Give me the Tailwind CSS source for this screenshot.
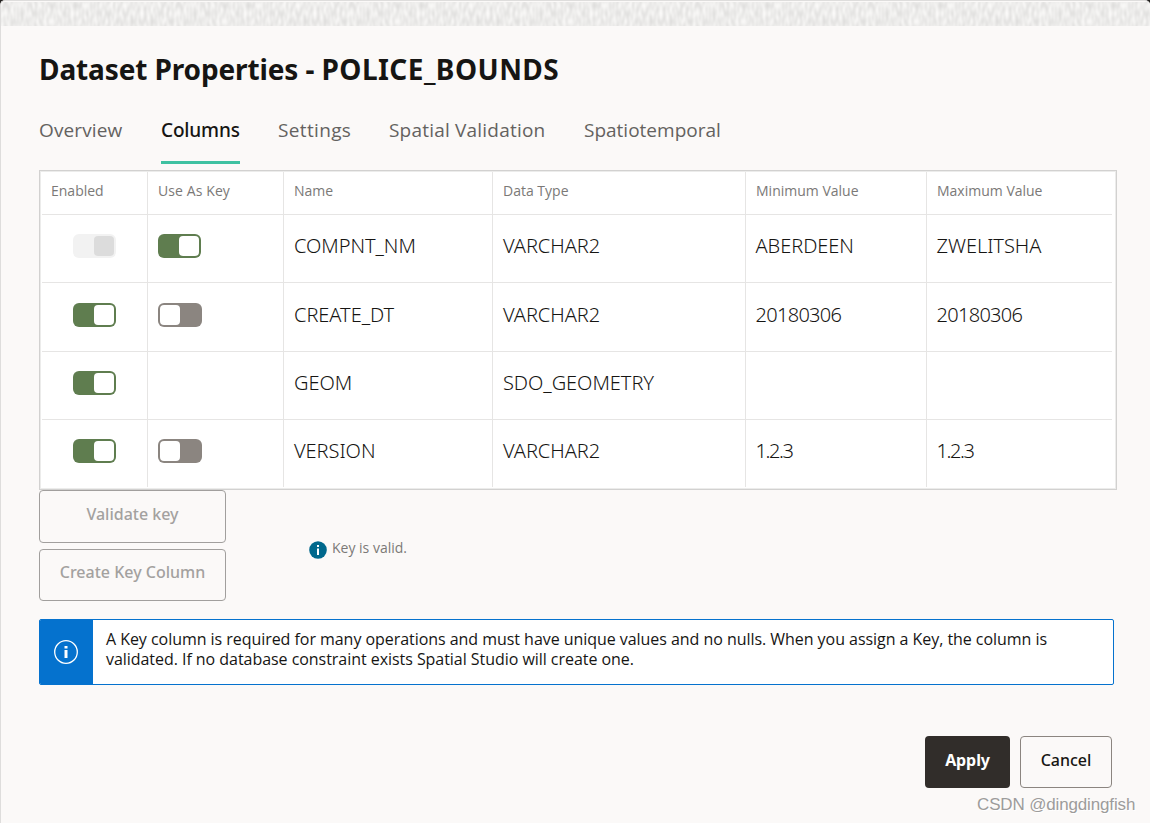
<!DOCTYPE html>
<html lang="en">
<head>
    <meta charset="UTF-8">
    <meta name="viewport" content="width=device-width, initial-scale=1.0">
    <title>Dataset Properties</title>
    <script src="https://cdn.jsdelivr.net/npm/@tailwindcss/browser@4"></script>
</head>
<body class="bg-[#23211f] font-['Noto_Sans',sans-serif] text-[#161513]">
  <div class="relative h-[823px] w-[1150px] overflow-hidden rounded-t-[5px] border-t border-l border-[#dedddc] bg-[#fbf9f8]">

    <!-- Texture strip -->
    <svg class="mt-px block h-6 w-full" viewBox="0 0 1149 24" preserveAspectRatio="none">
      <defs>
        <filter id="grain" x="0" y="0" width="100%" height="100%" color-interpolation-filters="sRGB">
          <feTurbulence type="fractalNoise" baseFrequency="0.3 0.12" numOctaves="1" seed="11" stitchTiles="stitch" />
          <feColorMatrix values="0.16 0 0 0 0.848  0.16 0 0 0 0.845  0.16 0 0 0 0.84  0 0 0 0 1" />
        </filter>
        <rect id="tile" width="173" height="24" filter="url(#grain)" />
      </defs>
      <rect width="1149" height="24" fill="#ebeae8" />
      <use href="#tile" />
      <use href="#tile" x="173" />
      <use href="#tile" x="346" />
      <use href="#tile" x="519" />
      <use href="#tile" x="692" />
      <use href="#tile" x="865" />
      <use href="#tile" x="1038" />
    </svg>

    <div class="pt-[23px] pl-[38px]">
      <h1 class="h-10 text-[28px] leading-10 font-bold tracking-[0.45px] whitespace-nowrap"><span class="tracking-[-0.12px]">Dataset Properties - </span>POLICE_BOUNDS</h1>

      <!-- Tabs -->
      <nav class="mt-[29px] flex h-[46px] gap-[38px] font-['Open_Sans',sans-serif] text-[19px] leading-6 text-[#64625f]">
        <a class="w-[84px] tracking-[0.12px] whitespace-nowrap">Overview</a>
        <a class="w-[79px] border-b-3 border-[#3fc1a1] font-['Noto_Sans',sans-serif] font-medium tracking-[-0.15px] whitespace-nowrap text-[#161513]">Columns</a>
        <a class="w-[73px] tracking-[0.35px] whitespace-nowrap">Settings</a>
        <a class="w-[157px] tracking-[0.2px] whitespace-nowrap">Spatial Validation</a>
        <a class="whitespace-nowrap">Spatiotemporal</a>
      </nav>

      <!-- Columns table -->
      <div class="mt-[6px] h-[320px] w-[1078px] border border-[#d2d1d0] bg-white">
        <div class="h-full border border-[#ececeb] pr-[3px] pl-px">
          <div class="grid h-[43px] grid-cols-[106px_136px_209px_253px_181px_1fr] border-b border-[#e6e5e4] font-['Open_Sans',sans-serif] text-[14px] leading-[38px] text-[#7b7977]">
            <div class="border-r border-[#e6e5e4] pl-[9px]">Enabled</div>
            <div class="border-r border-[#e6e5e4] pl-[10px] tracking-[0.1px]">Use As Key</div>
            <div class="border-r border-[#e6e5e4] pl-[10px]">Name</div>
            <div class="border-r border-[#e6e5e4] pl-[10px]">Data Type</div>
            <div class="border-r border-[#e6e5e4] pl-[10px]">Minimum Value</div>
            <div class="pl-[10px]">Maximum Value</div>
          </div>
          <div id="rows" class="text-[20px] leading-6 font-light tracking-[-0.05px]"></div>
        </div>
      </div>

      <!-- Key actions -->
      <div class="flex">
        <div class="flex w-[187px] flex-col gap-1.5">
          <button class="h-[53px] rounded border border-[#a19f9d] pb-1.5 text-base leading-6 font-medium text-[#a3a19f]">Validate key</button>
          <button class="h-[52px] rounded border border-[#a19f9d] pb-[7px] text-base leading-6 font-medium text-[#a3a19f]">Create Key Column</button>
        </div>
        <div class="mt-12 ml-[83px] flex h-6 gap-[5px]">
          <svg class="mt-[3px] h-[18px] w-[18px]" viewBox="0 0 18 18">
            <circle cx="9" cy="9" r="8.8" fill="#00688c" />
            <path d="M8 4h2v2H8zM8 7.5h2V14H8z" fill="#fff" />
          </svg>
          <span class="font-['Open_Sans',sans-serif] text-[14px] leading-5 text-[#7b7977]">Key is valid.</span>
        </div>
      </div>

      <!-- Info banner -->
      <div class="mt-[18px] flex h-[66px] w-[1075px] overflow-hidden rounded-[2px] border border-[#0572ce] bg-white">
        <div class="flex w-[53px] items-center bg-[#0572ce] pl-[14px]">
          <svg class="h-6 w-6" viewBox="0 0 24 24">
            <circle cx="12" cy="12" r="11.3" fill="none" stroke="#fff" stroke-width="1.3" />
            <path d="M10.5 6h3v2.6h-3zM10.5 10h3v8h-3z" fill="#fff" />
          </svg>
        </div>
        <p class="pt-[9px] pl-[13px] font-['Open_Sans',sans-serif] text-base leading-5 tracking-[-0.045px] whitespace-nowrap">A Key column is required for many operations and must have unique values and no nulls. When you assign a Key, the column is<br>validated. If no database constraint exists Spatial Studio will create one.</p>
      </div>

      <!-- Footer -->
      <div class="mt-[51px] flex w-[1073px] justify-end gap-2.5">
        <button class="h-[52px] w-[85px] rounded bg-[#312d2a] pb-[5px] text-base leading-6 font-bold tracking-[-0.1px] text-white">Apply</button>
        <button class="h-[52px] w-[92px] rounded border border-[#8b8580] pb-[5px] text-base leading-6 font-medium">Cancel</button>
      </div>
    </div>

    <div class="absolute top-[792px] left-[976px] font-['Liberation_Sans',sans-serif] text-[17px] leading-6 tracking-[-0.15px] whitespace-nowrap text-[#9d9c9b] [text-shadow:1px_1px_0_#fff]">CSDN @dingdingfish</div>
  </div>

  <script>
    // Toggle markup for each state
    const toggles = {
      on: '<div class="flex h-6 w-[43px] justify-end rounded-md bg-[#5f7d4f] p-[2px]"><div class="h-5 w-5 rounded bg-white"></div></div>',
      off: '<div class="flex h-6 w-11 rounded-md bg-[#8b8580] p-[2px]"><div class="h-5 w-5 rounded bg-white"></div></div>',
      disabled: '<div class="flex h-6 w-[43px] justify-end rounded-md bg-[#f2f2f2] p-[2px]"><div class="h-5 w-5 rounded bg-[#dcdcdc]"></div></div>',
      none: '',
    };

    const rows = [
      { height: 'h-[68px] pt-[19px]', enabled: 'disabled', key: 'on', name: 'COMPNT_NM', type: 'VARCHAR2', min: 'ABERDEEN', max: 'ZWELITSHA' },
      { height: 'h-[69px] pt-5', enabled: 'on', key: 'off', name: 'CREATE_DT', type: 'VARCHAR2', min: '20180306', max: '20180306' },
      { height: 'h-[68px] pt-[19px]', enabled: 'on', key: 'none', name: 'GEOM', type: 'SDO_GEOMETRY', min: '', max: '' },
      { height: 'h-[67px] pt-[19px]', enabled: 'on', key: 'off', name: 'VERSION', type: 'VARCHAR2', min: '1.2.3', max: '1.2.3' },
    ];

    // Digits are set tighter than capitals, version numbers tighter still
    function valueClass(value) {
      if (value.includes('.')) return 'tracking-[-1.4px]';
      return /^\d+$/.test(value) ? 'tracking-[-0.7px]' : '';
    }

    document.getElementById('rows').innerHTML = rows.map((r, i) => {
      const line = i < rows.length - 1 ? 'border-b' : '';
      const cell = `border-r border-[#e6e5e4] ${r.height}`;
      return `
        <div class="grid grid-cols-[106px_136px_209px_253px_181px_1fr] border-[#e6e5e4] ${line} ${i === 1 ? 'h-[69px]' : 'h-[68px]'} overflow-hidden">
          <div class="${cell} pl-[31px]">${toggles[r.enabled]}</div>
          <div class="${cell} pl-[10px]">${toggles[r.key]}</div>
          <div class="${cell} pl-[10px]">${r.name}</div>
          <div class="${cell} pl-[10px]">${r.type}</div>
          <div class="${cell} pl-[9.5px] ${valueClass(r.min)}">${r.min}</div>
          <div class="${r.height} pl-[9.5px] ${valueClass(r.max)}">${r.max}</div>
        </div>`;
    }).join('');
  </script>
</body>
</html>
